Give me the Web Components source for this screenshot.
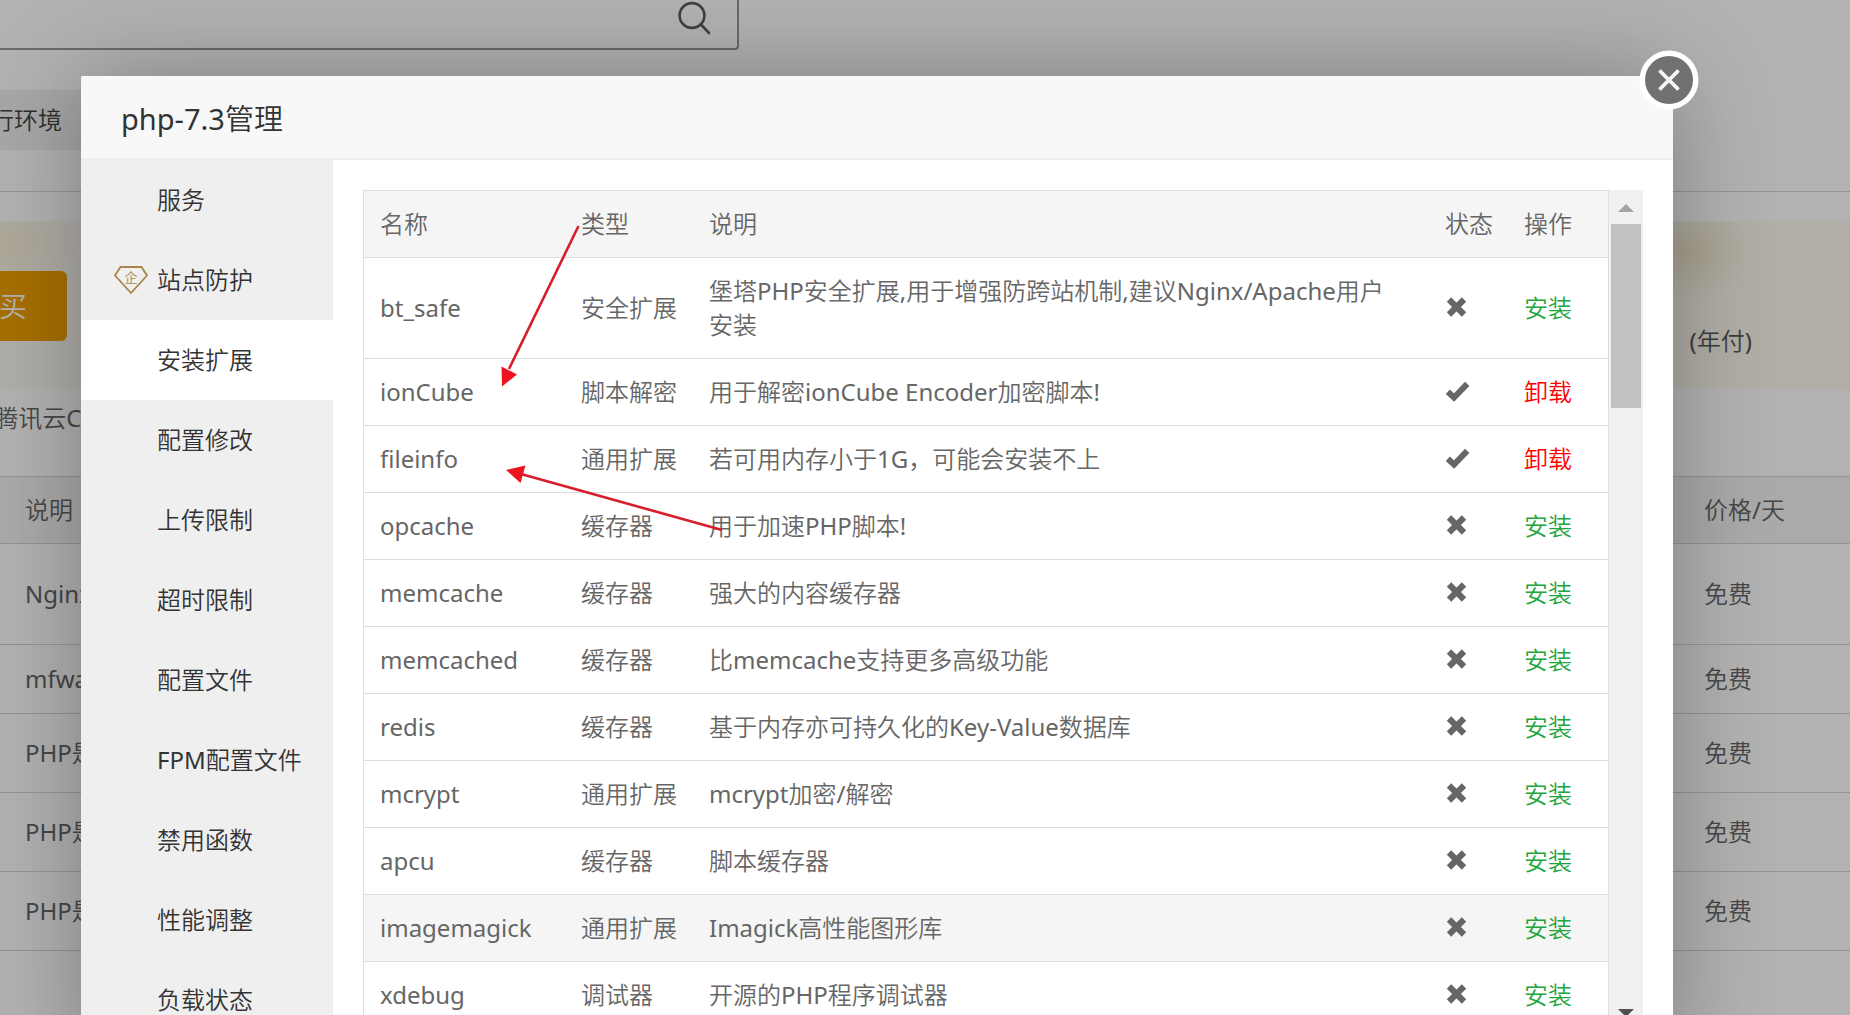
<!DOCTYPE html>
<html lang="zh-CN">
<head>
<meta charset="utf-8">
<title>php-7.3管理</title>
<style>
  html, body { margin: 0; height: 100%; overflow: hidden; }
  body {
    font-family: "Noto Sans", "Noto Sans CJK SC DemiLight", "Noto Sans CJK SC Light", "Noto Sans CJK SC", sans-serif;
    font-size: 24px; line-height: 34px; color: #666; background: #fff;
  }
</style>
</head>
<body>
<panel-app></panel-app>

<script>
const define = (name, html, setup) => customElements.define(name, class extends HTMLElement {
  connectedCallback() {
    if (this.shadowRoot) return;
    const root = this.attachShadow({ mode: 'open' });
    root.innerHTML = html;
    if (setup) setup(root, this);
  }
});

/* ---------- software store page behind the dialog ---------- */
define('store-search', `
  <style>
    :host { display: block; height: 50px; margin-bottom: 40px; }
    form { box-sizing: border-box; width: 739px; height: 50px; display: flex; align-items: flex-start;
      border: 2px solid #999; border-top: 0; border-left: 0; border-radius: 0 0 4px 0; }
    input { flex: 1; min-width: 0; height: 34px; border: 0; background: none; outline: 0; font: inherit; }
    button { border: 0; background: none; padding: 0 25px 0 0; height: 36px; }
    svg { display: block; }
  </style>
  <form>
    <input type="text" aria-label="搜索">
    <button type="button" aria-label="搜索按钮">
      <svg width="34" height="36" viewBox="0 0 34 36" fill="none" stroke="#5c5c5c" stroke-width="2.6" stroke-linecap="round">
        <circle cx="14" cy="15.500" r="12.4"/><path d="M23 24.500L31 33"/>
      </svg>
    </button>
  </form>`);

define('store-tabs', `
  <style>
    :host { display: block; padding-bottom: 41px; border-bottom: 1px solid #d4d4d4; }
    button { border: 0; background: #efefef; font: inherit; color: #444; height: 60px; width: 82px;
      padding: 0 20px 0 0; display: flex; justify-content: flex-end; align-items: center;
      white-space: nowrap; overflow: hidden; }
  </style>
  <button type="button">行环境</button>`);

define('store-banner', `
  <style>
    :host { display: flex; align-items: center; justify-content: space-between; box-sizing: border-box;
      height: 168px; margin-top: 29px; padding-right: 98px; color: #555;
      background:
        radial-gradient(ellipse 70px 50px at calc(100% - 165px) 30px, #f0e8cb, #f0e8cb00),
        radial-gradient(ellipse 70px 50px at 10px 22px, #f9f0d9, #f9f0d900),
        linear-gradient(90deg, #fcf9f2, #fef9ef); }
    button { width: 67px; height: 70px; margin-top: 2px; padding: 0 40px 0 0; border: 0; border-radius: 0 6px 6px 0;
      background: #f0a000; color: #fff; font: inherit; font-size: 28px; display: flex;
      align-items: center; justify-content: flex-end; }
    span { margin-top: 71px; }
  </style>
  <button type="button">买</button><span>(年付)</span>`);

define('store-note', `
  <style>
    :host { display: flex; align-items: center; height: 87px; width: 98px; justify-content: flex-end;
      white-space: nowrap; overflow: hidden; box-sizing: border-box; padding: 0 2px 29px 0; }
  </style>
  <span>腾讯云CC</span>`);

define('store-list', `
  <style>
    :host { display: block; }
    table { width: 100%; border-spacing: 0; table-layout: fixed; border-top: 1px solid #d4d4d4; }
    th, td { padding: 16px; text-align: left; font-weight: inherit; border-bottom: 1px solid #d4d4d4;
      box-sizing: border-box; }
    th { background: #f4f4f4; }
    th:first-child, td:first-child { padding-left: 25px; }
    th:last-child { width: 162px; }
    .h100 { height: 101px; } .h69 { height: 69px; } .h79 { height: 79px; }
  </style>
  <table><thead><tr><th>说明</th><th>价格/天</th></tr></thead>
  <tbody>
    <tr><td class="h100">Nginx</td><td>免费</td></tr>
    <tr><td class="h69">mfwa</td><td>免费</td></tr>
    <tr><td class="h79">PHP是</td><td>免费</td></tr>
    <tr><td class="h79">PHP是</td><td>免费</td></tr>
    <tr><td class="h79">PHP是</td><td>免费</td></tr>
  </tbody></table>`);

/* ---------- dialog parts ---------- */
define('side-menu', `
  <style>
    :host { display: block; flex: none; width: 252px; background: #efefef; overflow: hidden; }
    a { display: flex; align-items: center; height: 80px; padding-left: 32px; color: #333;
      text-decoration: none; white-space: nowrap; }
    a[aria-current] { background: #fff; }
    .icon { flex: none; width: 44px; }
    svg { display: block; }
    text { font-size: 13px; }
  </style>
  <nav></nav>`, root => {
  const gem = `<svg width="36" height="32" viewBox="0 0 36 32"><path d="M7.500 3H28.500L34 11.500L18 29L2 11.500Z" fill="none" stroke="#a8864a" stroke-width="1.800"/><text x="18" y="18" text-anchor="middle" fill="#a8864a">企</text></svg>`;
  root.querySelector('nav').innerHTML =
    ['服务','站点防护','安装扩展','配置修改','上传限制','超时限制','配置文件','FPM配置文件','禁用函数','性能调整','负载状态']
    .map((t, n) => `<a href="#"${n === 2 ? ' aria-current="page"' : ''}><span class="icon">${n === 1 ? gem : ''}</span>${t}</a>`).join('');
});

define('state-icon', `
  <style>:host { display: block; height: 34px; } svg { display: block; }</style>`, (root, el) => {
  root.innerHTML += el.hasAttribute('on')
    ? '<svg width="26" height="34" viewBox="0 0 26 34"><path d="M2.800 16.800L9 22.500L22.200 8.800" fill="none" stroke="#666" stroke-width="6"/></svg>'
    : '<svg width="26" height="34" viewBox="0 0 26 34"><path d="M4 8.500L19 23.500M19 8.500L4 23.500" fill="none" stroke="#666" stroke-width="6.200"/></svg>';
});

define('extension-table', `
  <style>
    :host { display: block; flex: 1; min-width: 0; overflow: hidden; }
    table { width: 100%; border-spacing: 0; table-layout: fixed; border: 1px solid #ddd; box-sizing: border-box; }
    th, td { padding: 16px 0 16px 16px; text-align: left; font-weight: inherit; border-bottom: 1px solid #ddd; }
    th { background: #f5f5f5; }
    tr.hover td { background: #f5f5f5; }
    th:nth-child(1) { width: 185px; } th:nth-child(2) { width: 112px; }
    th:nth-child(3), td:nth-child(3) { padding-right: 36px; }
    th:nth-child(4) { width: 63px; } th:nth-child(5) { width: 84px; }
    a { color: #20a53a; text-decoration: none; }
    a.remove { color: #f00; }
  </style>
  <table><thead><tr><th>名称</th><th>类型</th><th>说明</th><th>状态</th><th>操作</th></tr></thead><tbody></tbody></table>`, root => {
  const rows = [
    ['bt_safe','安全扩展','堡塔PHP安全扩展,用于增强防跨站机制,建议Nginx/Apache用户安装'],
    ['ionCube','脚本解密','用于解密ionCube Encoder加密脚本!', 1],
    ['fileinfo','通用扩展','若可用内存小于1G，可能会安装不上', 1],
    ['opcache','缓存器','用于加速PHP脚本!'],
    ['memcache','缓存器','强大的内容缓存器'],
    ['memcached','缓存器','比memcache支持更多高级功能'],
    ['redis','缓存器','基于内存亦可持久化的Key-Value数据库'],
    ['mcrypt','通用扩展','mcrypt加密/解密'],
    ['apcu','缓存器','脚本缓存器'],
    ['imagemagick','通用扩展','Imagick高性能图形库'],
    ['xdebug','调试器','开源的PHP程序调试器']
  ];
  root.querySelector('tbody').innerHTML = rows.map(([a, b, c, on]) =>
    `<tr${a === 'imagemagick' ? ' class="hover"' : ''}><td>${a}</td><td>${b}</td><td>${c}</td><td><state-icon${on ? ' on' : ''}></state-icon></td><td><a href="#"${on ? ' class="remove"' : ''}>${on ? '卸载' : '安装'}</a></td></tr>`).join('');
});

define('scroll-rail', `
  <style>
    :host { display: flex; flex-direction: column; align-items: center; flex: none; width: 34px;
      background: #f0f0f0; padding: 14px 0; box-sizing: border-box; }
    svg { display: block; flex: none; }
    div { width: 30px; height: 184px; margin: 12px 0 auto; background: #c1c1c1; }
  </style>
  <svg width="16" height="8"><path d="M0 8L8 0L16 8Z" fill="#a3a3a3"/></svg>
  <div></div>
  <svg width="16" height="8"><path d="M0 0L8 8L16 0Z" fill="#505050"/></svg>`);

define('manage-dialog', `
  <style>
    :host { position: absolute; left: 81px; right: 177px; top: 76px; bottom: -46px; display: flex;
      flex-direction: column; background: #fff; border-radius: 2px; box-shadow: 0 2px 96px rgba(0,0,0,.3); }
    header { flex: none; height: 84px; box-sizing: border-box; border-bottom: 2px solid #eee; background: #f8f8f8;
      padding: 4px 0 0 40px; display: flex; align-items: center; border-radius: 2px 2px 0 0; }
    h1 { margin: 0; font-size: 29px; font-weight: inherit; color: #333; }
    .body { flex: 1; min-height: 0; display: flex; }
    main { flex: 1; min-width: 0; display: flex; padding: 30px; }
    .close { position: absolute; right: -26px; top: -26px; width: 60px; height: 60px; padding: 0; border: 0; background: none; }
    .close svg { display: block; }
    .marks { position: absolute; left: 0; top: 0; pointer-events: none; }
  </style>
  <header><h1><slot name="title"></slot></h1></header>
  <div class="body"><side-menu></side-menu><main><slot></slot></main></div>
  <button class="close" type="button" aria-label="关闭">
    <svg width="60" height="60" viewBox="0 0 60 60"><circle cx="30" cy="30" r="29.500" fill="#fff"/><circle cx="30" cy="30" r="24" fill="#717171"/><path d="M20.500 20.500L39.500 39.500M39.500 20.500L20.500 39.500" stroke="#f8f8f8" stroke-width="3.800"/></svg>
  </button>
  <svg class="marks" width="660" height="470" viewBox="81 76 660 470" fill="#ed1422" stroke="#d81e2c" stroke-width="2.600">
    <path d="M578.500 226L509 369"/><path d="M501.500 366.500L517 374.500L502 386.500Z" stroke="none"/>
    <path d="M722 530L521 474"/><path d="M506 470L525.500 465.500L520.500 483Z" stroke="none"/>
  </svg>`);

define('panel-app', `
  <style>
    :host { display: block; position: relative; height: 100vh; overflow: hidden; }
    .shade { position: absolute; inset: 0; background: rgba(0,0,0,.3); }
  </style>
  <store-search></store-search>
  <store-tabs></store-tabs>
  <store-banner></store-banner>
  <store-note></store-note>
  <store-list></store-list>
  <div class="shade"></div>
  <manage-dialog><span slot="title">php-7.3管理</span><extension-table></extension-table><scroll-rail></scroll-rail></manage-dialog>`);
</script>
</body>
</html>
